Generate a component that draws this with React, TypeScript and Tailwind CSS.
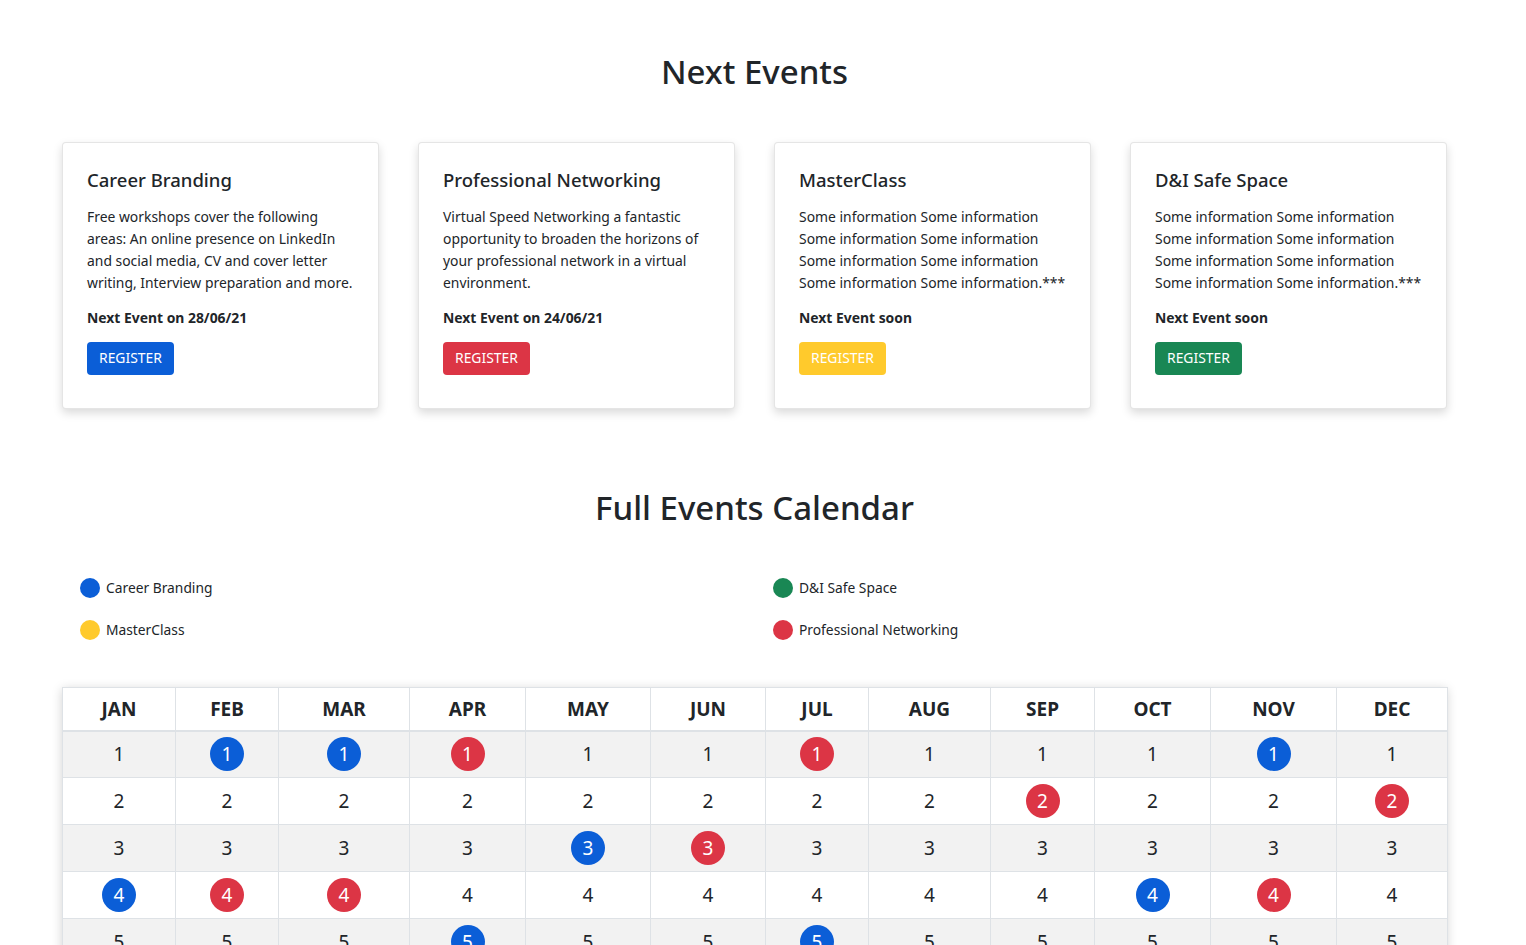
import React from 'react';

type Tone = 'blue' | 'red' | 'yellow' | 'green';

const toneBg: Record<Tone, string> = {
  blue: 'bg-[#0b5ed7]',
  red: 'bg-[#dc3545]',
  yellow: 'bg-[#ffca2c]',
  green: 'bg-[#198754]',
};

const events: { title: string; lines: string[]; next: string; tone: Tone }[] = [
  {
    title: 'Career Branding',
    lines: [
      'Free workshops cover the following',
      'areas: An online presence on LinkedIn',
      'and social media, CV and cover letter',
      'writing, Interview preparation and more.',
    ],
    next: 'Next Event on 28/06/21',
    tone: 'blue',
  },
  {
    title: 'Professional Networking',
    lines: [
      'Virtual Speed Networking a fantastic',
      'opportunity to broaden the horizons of',
      'your professional network in a virtual',
      'environment.',
    ],
    next: 'Next Event on 24/06/21',
    tone: 'red',
  },
  {
    title: 'MasterClass',
    lines: [
      'Some information Some information',
      'Some information Some information',
      'Some information Some information',
      'Some information Some information.***',
    ],
    next: 'Next Event soon',
    tone: 'yellow',
  },
  {
    title: 'D&I Safe Space',
    lines: [
      'Some information Some information',
      'Some information Some information',
      'Some information Some information',
      'Some information Some information.***',
    ],
    next: 'Next Event soon',
    tone: 'green',
  },
];

const months = ['JAN', 'FEB', 'MAR', 'APR', 'MAY', 'JUN', 'JUL', 'AUG', 'SEP', 'OCT', 'NOV', 'DEC'];
const colWidths = ['w-[113px]', 'w-[103px]', 'w-[131px]', 'w-[116px]', 'w-[125px]', 'w-[115px]', 'w-[103px]', 'w-[122px]', 'w-[104px]', 'w-[116px]', 'w-[126px]', 'w-[111px]'];

// key: "day-monthIndex"
const marked: Record<string, Tone> = {
  '1-1': 'blue', '1-2': 'blue', '1-3': 'red', '1-6': 'red', '1-10': 'blue',
  '2-8': 'red', '2-11': 'red',
  '3-4': 'blue', '3-5': 'red',
  '4-0': 'blue', '4-1': 'red', '4-2': 'red', '4-9': 'blue', '4-10': 'red',
  '5-3': 'blue', '5-6': 'blue',
  '8-0': 'red', '8-5': 'blue', '9-7': 'red', '10-2': 'blue', '11-9': 'red',
  '15-4': 'red', '16-1': 'blue', '18-6': 'red', '22-3': 'red', '24-8': 'blue',
};

const legend: { label: string; tone: Tone }[] = [
  { label: 'Career Branding', tone: 'blue' },
  { label: 'D&I Safe Space', tone: 'green' },
  { label: 'MasterClass', tone: 'yellow' },
  { label: 'Professional Networking', tone: 'red' },
];

export default function App() {
  const days = Array.from({ length: 31 }, (_, i) => i + 1);

  return (
    <div className="w-[1509px] bg-white text-[#212529] font-['Noto_Sans',sans-serif] pb-20">
      <h1 className="pt-[50px] text-center text-[33px] leading-[43px] font-medium">Next Events</h1>

      <div className="mx-[62px] mt-[49px] grid grid-cols-4 gap-[39px]">
        {events.map((ev) => (
          <div
            key={ev.title}
            className="rounded border border-black/10 bg-white px-[24px] pt-[25px] pb-[33px] shadow-[0_4px_10px_rgba(0,0,0,0.15)]"
          >
            <h5 className="text-[18.5px] leading-[24px] font-medium">{ev.title}</h5>
            <p className="mt-[14px] text-[13.9px] leading-[22px] whitespace-nowrap">
              {ev.lines.map((l, i) => (
                <span key={i} className="block">{l}</span>
              ))}
            </p>
            <p className="mt-[13px] text-[13.9px] leading-[22px] font-bold">{ev.next}</p>
            <button className={`mt-[13px] h-[33px] px-[12px] rounded text-[13.9px] text-white ${toneBg[ev.tone]}`}>
              REGISTER
            </button>
          </div>
        ))}
      </div>

      <h2 className="mt-[77px] text-center text-[33px] leading-[44px] font-medium">Full Events Calendar</h2>

      <div className="mx-[62px] mt-[37px] pl-[18px] grid grid-cols-[693px_1fr]">
        {legend.map((item) => (
          <div key={item.label} className="h-[42px] flex items-center gap-[6px] text-[13.8px]">
            <span className={`w-[20px] h-[20px] rounded-full ${toneBg[item.tone]}`} />
            <span>{item.label}</span>
          </div>
        ))}
      </div>

      <div className="mx-[62px] mt-[36px] shadow-[0_2px_10px_rgba(0,0,0,0.18)]">
        <table className="w-full table-fixed border-collapse">
          <colgroup>
            {colWidths.map((w, i) => (
              <col key={i} className={w} />
            ))}
          </colgroup>
          <thead>
            <tr className="bg-white">
              {months.map((m) => (
                <th
                  key={m}
                  className="h-[43px] border border-b-2 border-[#dee2e6] text-center text-[19px] font-bold"
                >
                  {m}
                </th>
              ))}
            </tr>
          </thead>
          <tbody>
            {days.map((d) => (
              <tr key={d} className={d % 2 === 1 ? 'bg-[#f2f2f2]' : 'bg-white'}>
                {months.map((m, mi) => {
                  const tone = marked[`${d}-${mi}`];
                  return (
                    <td key={m} className="h-[47px] border border-[#dee2e6] text-center text-[19px]">
                      {tone ? (
                        <span
                          className={`inline-flex w-[34px] h-[34px] items-center justify-center rounded-full text-white ${toneBg[tone]}`}
                        >
                          {d}
                        </span>
                      ) : (
                        d
                      )}
                    </td>
                  );
                })}
              </tr>
            ))}
          </tbody>
        </table>
      </div>
    </div>
  );
}
